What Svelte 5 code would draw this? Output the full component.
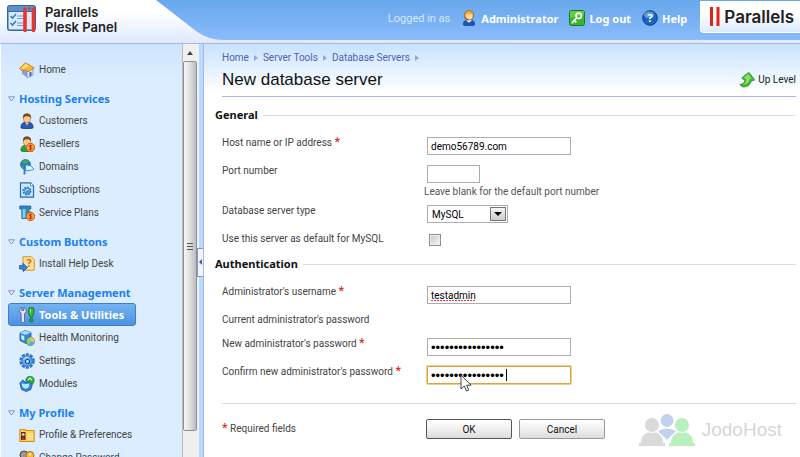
<script lang="ts">
	type NavItem = { label: string; icon: string; active?: boolean };
	type NavGroup = { title: string; items: NavItem[] };

	const groups: NavGroup[] = [
		{
			title: 'Hosting Services',
			items: [
				{ label: 'Customers', icon: 'customer' },
				{ label: 'Resellers', icon: 'reseller' },
				{ label: 'Domains', icon: 'domain' },
				{ label: 'Subscriptions', icon: 'subscription' },
				{ label: 'Service Plans', icon: 'plan' }
			]
		},
		{
			title: 'Custom Buttons',
			items: [{ label: 'Install Help Desk', icon: 'helpdesk' }]
		},
		{
			title: 'Server Management',
			items: [
				{ label: 'Tools & Utilities', icon: 'tools', active: true },
				{ label: 'Health Monitoring', icon: 'health' },
				{ label: 'Settings', icon: 'settings' },
				{ label: 'Modules', icon: 'modules' }
			]
		},
		{
			title: 'My Profile',
			items: [
				{ label: 'Profile & Preferences', icon: 'profile' },
				{ label: 'Change Password', icon: 'password' }
			]
		}
	];

	const crumbs = ['Home', 'Server Tools', 'Database Servers'];

	let host = $state('demo56789.com');
	let port = $state('');
	let serverType = $state('MySQL');
	let isDefault = $state(false);
	let username = $state('testadmin');
	let password = $state('abcdefgh12345678');
	let confirmPassword = $state('abcdefgh12345678');
</script>

{#snippet coin()}
	<circle cx="11.5" cy="11.5" r="4.2" fill="#f7a13c" stroke="#d8571c" />
	<path d="M13 9.8c-1-.8-2.8-.4-2.7.6.1 1.2 2.6.8 2.6 2.1 0 1.1-1.9 1.3-2.9.5M11.5 8.7v5.7" fill="none" stroke="#b02a10" stroke-width=".9" />
{/snippet}

{#snippet icon(name: string)}
	<svg class="icon" viewBox="0 0 16 16" aria-hidden="true">
		{#if name === 'home'}
			<path d="M3 7l5 2v6l-5-3z" fill="#8aa0d8" />
			<path d="M8 9l6-2v6l-6 3z" fill="#dfe6fa" stroke="#5a6fb4" stroke-width=".6" />
			<path d="M.5 6.500L6.500.8l8.700 5L9 9.800 7 7.600 3 9z" fill="#fbb829" stroke="#c4660c" stroke-width=".7" />
			<path d="M2 6.200l4.700-4.300 3 1.700L5 7z" fill="#ffe07a" />
			<path d="M10.500 10.500l2-.7v4l-2 .8z" fill="#4560b0" />
		{:else if name === 'customer' || name === 'reseller'}
			<path d="M2 15c-.5-4 1.500-6 6-6s6.500 2 6 6c-3 1.300-9 1.300-12 0z" fill={name === 'customer' ? '#2558b8' : '#2f9c3a'} stroke={name === 'customer' ? '#14357c' : '#17692a'} stroke-width=".6" />
			<path d="M6.200 9.300L8 13l1.700-3.700z" fill="#fff" />
			<path d="M8 10.200l.8 1-.8 2.400-.7-2.400z" fill="#d32" />
			<ellipse cx="8" cy="5.200" rx="3.700" ry="4.300" fill="#fbc987" stroke="#a05a1c" stroke-width=".5" />
			<path d="M4 5C3.600 1.500 5.800.4 8 .4s4.600 1.200 4 4.800C10.800 3.200 8.500 3 6.800 3.400 5.300 3.700 5 4.500 4 5z" fill="#7a4a18" />
			{#if name === 'reseller'}{@render coin()}{/if}
		{:else if name === 'operator'}
			<path d="M2.500 15c-.4-3.600 1.400-5.200 5.500-5.200s6 1.600 5.500 5.200c-3 1.200-8 1.200-11 0z" fill="#1d55b0" stroke="#123a7d" stroke-width=".6" />
			<path d="M5 10l3 2.800 3-2.800z" fill="#fff" />
			<circle cx="8" cy="5.300" r="4.700" fill="#f8a838" stroke="#9c4a10" stroke-width=".7" />
			<path d="M5.300 5c1-.8 4.300-.8 6-.3.500 3-1 4.800-3 4.800S5 7.500 5.300 5z" fill="#ffe2b4" />
			<path d="M4 7.200c.5 2 2 2.600 4 2.500" fill="none" stroke="#b02a10" />
		{:else if name === 'domain'}
			<circle cx="6.500" cy="5.500" r="5" fill="#2b7dc4" stroke="#14508c" stroke-width=".6" />
			<path d="M3 2.500c2-1.800 5-1.700 7 0C9 4 8 3.600 7 4.800 5.500 4.600 4 4 3 2.500zM2 6c2 .3 3 1.500 2.500 3.500C3 9 2 7.500 2 6z" fill="#3cb44a" />
			<path d="M5.500 5v10.500" stroke="#3d77b8" stroke-width="1.800" />
			<path d="M6.500 6.500c2-1.500 3 .8 5 0l3.500 3.500c-2 1.500-3.500 1-5 1.500-1 .3-2.500.5-3.500.2z" fill="#d6f0ff" stroke="#2784c8" stroke-width=".9" />
		{:else if name === 'subscription'}
			<path d="M1.500.8h10l3 3v11.400h-13z" fill="#cfe6fb" stroke="#2668b8" stroke-width="1.200" />
			<path d="M11.500.8v3h3" fill="#fff" stroke="#2668b8" stroke-width=".7" />
			<circle cx="8" cy="9" r="3.500" fill="#5aa4e4" stroke="#2c78c8" stroke-width="2" stroke-dasharray="1.700 1" />
			<circle cx="8" cy="9" r="3" fill="#4a94dc" />
			<path d="M6 9.500q1-2.500 3.500-2" fill="none" stroke="#d8eeff" />
		{:else if name === 'plan'}
			<path d="M.8 1h11v3h-2v9.500h-7V4h-2z" fill="#2c86c8" stroke="#12508e" stroke-width=".7" />
			<path d="M3.500 4h3v9h-3z" fill="#7bd0e8" />
			<path d="M8 5c2 0 4 1 4.500 3L9 8z" fill="#3aa03a" />
			{@render coin()}
		{:else if name === 'helpdesk'}
			<path d="M4 .8h8.500l2.700 2.700v10.700H4z" fill="#ffe6a0" stroke="#e08a14" />
			<text x="10" y="11" class="glyph" fill="#e8640c">?</text>
			<path d="M.5 9.500h3.500V7.300l4.500 4.200L4 15.600V13H.5z" fill="#2f86dc" stroke="#134a94" stroke-width=".7" />
		{:else if name === 'tools'}
			<path d="M1 1.500l1.800-1v3h2v-3L7 2c.8 2 0 3.500-1.500 4.300V14c0 2-3.300 2-3.300 0V6.300C.7 5.500.2 3.300 1 1.500z" fill="#e4e6f4" stroke="#50587c" stroke-width=".8" />
			<path d="M10 .8h4.500l.7 4.700-1.900 4.700h-2L9.300 5.500z" fill="#33b83c" stroke="#0d6e1c" stroke-width=".8" />
			<path d="M10.800 2h1.200v6z" fill="#b0f2a4" />
			<rect x="10.500" y="11.500" width="3.600" height="3.500" rx="1.500" fill="#28a032" stroke="#0d6e1c" stroke-width=".7" />
		{:else if name === 'health'}
			<path d="M1 3l5-2.500 6 2v9l-5 2-6-3z" fill="#2f86dc" stroke="#134a94" stroke-width=".7" />
			<path d="M1 3l5.500 2L12 2.500 6 .5z" fill="#a6dcfb" />
			<path d="M2.300 5l3 1.200v4.500l-3-1.400z" fill="#d3efff" />
			<circle cx="11.300" cy="11.300" r="4.200" fill="#8fd068" stroke="#39738e" stroke-width=".8" />
			<path d="M11.300 11.300V7.100a4.200 4.200 0 0 1 4 5.200z" fill="#fbc54a" />
			<path d="M11.300 11.300l4 1a4.200 4.200 0 0 1-5 3z" fill="#5ba6ec" />
		{:else if name === 'settings'}
			<circle cx="8" cy="8" r="6.500" fill="none" stroke="#2a74cc" stroke-width="2.400" stroke-dasharray="3 1.100" />
			<circle cx="8" cy="8" r="5.200" fill="#62abed" stroke="#2a74cc" />
			<path d="M4.500 6.500q1.500-2.500 5-2.300" fill="none" stroke="#c4e4ff" stroke-width="1.200" />
			<circle cx="8.500" cy="8.500" r="2" fill="#eaf5ff" stroke="#164a92" stroke-width="1.200" />
		{:else if name === 'modules'}
			<circle cx="11" cy="4.500" r="4.100" fill="#37b03f" stroke="#136c22" stroke-width=".7" />
			<path d="M9 4.200l2-2 2 2" fill="none" stroke="#d7ffcf" stroke-width="1.200" />
			<path d="M.8 7l3-3 3 2.500 3.500-.5 3 2.500-1.500 5-4.500 2-4.800-2z" fill="#2f8be0" stroke="#134f9e" stroke-width=".8" />
			<path d="M2.500 7.200l3.500 1 4.500-.6-1 4-2.800 1.200-3-1.600z" fill="#bfe6ff" />
		{:else if name === 'profile'}
			<path d="M.8 2.500h6v1h8.400v11H.8z" fill="#ffcf54" stroke="#d98a12" />
			<rect x="2" y="5" width="4.500" height="8" fill="#4a2a3a" />
			<circle cx="4.200" cy="7.500" r="1.500" fill="#fbc987" />
			<path d="M2.500 12.500q1.700-4 3.500 0z" fill="#d8401c" />
			<path d="M8.500 7H14M8.500 9.500H14M8.500 12H14" stroke="#fff6cc" />
		{:else if name === 'password'}
			<circle cx="5" cy="5" r="4" fill="#999" stroke="#444" />
			<circle cx="11" cy="5.500" r="4" fill="#fbb829" stroke="#b8660c" />
			<circle cx="11" cy="4.500" r="1.200" fill="#fff" />
			<path d="M4 8l-2 7h3l1.500-6zM10 9v6.500h2.500V9z" fill="#c98a1c" />
		{:else if name === 'logout'}
			<rect x=".5" y=".5" width="15" height="15" rx="2" fill="#3cb52e" stroke="#18801a" />
			<path d="M1 8V2q0-1 1-1h12q1 0 1 1v3z" fill="#7fdc62" opacity=".6" />
			<circle cx="9.700" cy="5.800" r="2.700" fill="none" stroke="#fff" stroke-width="1.700" />
			<path d="M7.800 7.800L3.500 12v1.500M5.300 10.300l2 2" fill="none" stroke="#fff" stroke-width="1.700" />
		{:else if name === 'help'}
			<circle cx="8" cy="8" r="7.300" fill="#1f62c0" stroke="#0e3f8c" />
			<ellipse cx="7" cy="4.800" rx="5" ry="3.300" fill="#7db5f0" opacity=".7" />
			<text x="8" y="12" class="glyph" fill="#fff">?</text>
		{:else if name === 'up'}
			<path d="M9.500.8q1 0 1.500.8l4.300 5.900q.5 1-.6 1h-2.200c-1.200 4.800-5.200 7.200-9.300 6.200L.8 12.600c3.200-.4 4.800-1.800 5.200-4.600L3.400 6.800q-.8-.6-.1-1.400L8.200 1.400Q8.800.8 9.500.8z" fill="#46b936" stroke="#2a8a26" stroke-width=".8" />
			<path d="M9.300 2L4.900 5.700l2.700 1.500c-.3 2.500-1.600 4.300-3.600 5.300 4-.2 6-2.500 6.500-5.800h2z" fill="#8fe072" />
		{/if}
	</svg>
{/snippet}

{#snippet star()}<span class="star">*</span>{/snippet}

<div class="page">
	<header class="top">
		<div class="brand">
			<svg class="brand-mark" viewBox="0 0 30 28" aria-hidden="true">
				<rect x="0" y="0" width="29" height="26" rx="3" fill="#2f67ad" />
				<path d="M1 6V3q0-2 2-2h23q2 0 2 2v3z" fill="#5f90cc" />
				<path d="M1.500 7h26v16q0 1.500-1.500 1.500H3q-1.500 0-1.500-1.500z" fill="#dbe9f8" />
				<path d="M3.500 11l2 2L9 9M3.500 18l2 2L9 16" fill="none" stroke="#2f7ed0" stroke-width="1.600" />
				<path d="M10 11h7M10 13.500h7M10 18h7M10 20.500h7" stroke="#6f9fd6" />
				<path d="M18 4v21.500M26.500 4v21.500" stroke="#e8342c" stroke-width="3.600" stroke-linecap="round" />
				<circle cx="22.300" cy="3.500" r="1.300" fill="#e8342c" />
			</svg>
			<div class="brand-name">Parallels<br />Plesk Panel</div>
		</div>
		<nav class="account">
			<span class="logged">Logged in as</span>
			<a href="#administrator">{@render icon('operator')}Administrator</a>
			<a href="#logout">{@render icon('logout')}Log out</a>
			<a href="#help">{@render icon('help')}Help</a>
		</nav>
		<a class="vendor" href="#parallels">
			<svg class="bars" viewBox="0 0 10 19" aria-hidden="true">
				<path d="M1.500 0v19M8 0v19" stroke="#e2231a" stroke-width="3" />
			</svg>
			Parallels
		</a>
	</header>

	<div class="body">
		<aside class="sidebar">
			<nav class="menu">
				<ul>
					<li><a class="item" href="#home">{@render icon('home')}Home</a></li>
				</ul>
				{#each groups as group}
					<h2>
						<svg class="fold" viewBox="0 0 7 6" aria-hidden="true"><path d="M.5.8h6L3.500 5z" fill="#e8f0ff" stroke="#7a86d0" stroke-width=".9" /></svg>
						{group.title}
					</h2>
					<ul>
						{#each group.items as item}
							<li>
								<a class="item" class:active={item.active} href="#{item.icon}">
									{@render icon(item.icon)}{item.label}
								</a>
							</li>
						{/each}
					</ul>
				{/each}
			</nav>
			<div class="scrollbar">
				<div class="scroll-up">
					<svg viewBox="0 0 6 4" aria-hidden="true"><path d="M0 4l3-4 3 4z" fill="#444" /></svg>
				</div>
				<div class="thumb"><i></i><i></i><i></i></div>
			</div>
			<div class="splitter">
				<button class="collapse" aria-label="Hide sidebar">
					<svg viewBox="0 0 3 6" aria-hidden="true"><path d="M3 0v6L0 3z" fill="#4058b0" /></svg>
				</button>
			</div>
		</aside>

		<main>
			<nav class="crumbs">
				{#each crumbs as crumb}
					<a href="#crumb">{crumb}</a>
					<svg viewBox="0 0 4 6" aria-hidden="true"><path d="M0 0l4 3-4 3z" fill="#8fa4e8" /></svg>
				{/each}
			</nav>
			<div class="heading">
				<h1>New database server</h1>
				<a class="up-level" href="#up">{@render icon('up')}Up Level</a>
			</div>

			<form onsubmit={(e) => e.preventDefault()}>
				<fieldset>
					<h3>General</h3>
					<div class="row">
						<label for="host">Host name or IP address {@render star()}</label>
						<input id="host" class="text" type="text" bind:value={host} />
					</div>
					<div class="row port">
						<label for="port">Port number</label>
						<div>
							<input id="port" class="text short" type="text" bind:value={port} />
							<p class="hint">Leave blank for the default port number</p>
						</div>
					</div>
					<div class="row">
						<label for="type">Database server type</label>
						<div class="select">
							<select id="type" bind:value={serverType}>
								<option>MySQL</option>
								<option>PostgreSQL</option>
							</select>
							<span class="drop"><svg viewBox="0 0 8 4" aria-hidden="true"><path d="M0 0h8L4 4z" fill="#000" /></svg></span>
						</div>
					</div>
					<div class="row last">
						<label for="default">Use this server as default for MySQL</label>
						<input id="default" class="check" type="checkbox" bind:checked={isDefault} />
					</div>
				</fieldset>

				<fieldset>
					<h3>Authentication</h3>
					<div class="row">
						<label for="username">Administrator's username {@render star()}</label>
						<div class="field">
							<input id="username" class="text" type="text" spellcheck="false" bind:value={username} />
							<span class="squiggle"></span>
						</div>
					</div>
					<div class="row current">
						<span>Current administrator's password</span>
					</div>
					<div class="row">
						<label for="password">New administrator's password {@render star()}</label>
						<input id="password" class="text" type="password" bind:value={password} />
					</div>
					<div class="row">
						<label for="confirm">Confirm new administrator's password {@render star()}</label>
						<div class="field">
							<input id="confirm" class="text focused" type="password" bind:value={confirmPassword} />
							<span class="caret"></span>
							<svg class="pointer" viewBox="0 0 12 18" aria-hidden="true">
								<path d="M1 1v14l3.300-3 2.300 5 2.200-1-2.200-4.800H11z" fill="#fff" stroke="#3c4250" />
							</svg>
						</div>
					</div>
				</fieldset>

				<div class="row actions">
					<span>{@render star()} Required fields</span>
					<div class="buttons">
						<button class="btn primary" type="submit">OK</button>
						<button class="btn" type="button">Cancel</button>
					</div>
				</div>
			</form>

			<div class="watermark">
				<svg viewBox="0 0 56 32" aria-hidden="true">
					<path d="M19 17q9-5 18 0l-9 9z" fill="#c3d2ec" />
					<circle cx="28" cy="6.500" r="6.500" fill="#c3d2ec" />
					<path d="M0 32v-3h2c0-7 4-11 11-11s11 4 11 11h2v3z" fill="#dadada" />
					<circle cx="13" cy="11" r="7.500" fill="#dadada" stroke="#fff" />
					<path d="M30 32v-3h2c0-7 4-11 11-11s11 4 11 11h2v3z" fill="#b9f0bd" />
					<circle cx="43" cy="11" r="7.500" fill="#b9f0bd" stroke="#fff" />
				</svg>
				<span>JodoHost</span>
			</div>
		</main>
	</div>
</div>

<style>
	:global(body) {
		background: #fff;
	}

	.page {
		display: flex;
		flex-direction: column;
		height: 100vh;
		overflow: hidden;
		font-family: Roboto, 'Liberation Sans', sans-serif;
		font-size: 10px;
		line-height: 12px;
		color: #444;
	}

	a {
		color: inherit;
		text-decoration: none;
	}

	h1,
	h2,
	h3,
	p,
	ul,
	fieldset {
		margin: 0;
		padding: 0;
		border: none;
		list-style: none;
	}

	.icon {
		width: 16px;
		height: 16px;
		flex: none;
	}

	.glyph {
		font: bold 11px/11px 'Noto Sans', sans-serif;
		text-anchor: middle;
	}

	.top {
		display: flex;
		align-items: flex-start;
		flex: none;
		height: 40px;
		background: linear-gradient(#67a8ec, #8abbfb);
		border-bottom: 3px solid #e2ebfd;
		box-shadow: 0 1px 0 #a8b5e8;
		position: relative;
	}

	.brand {
		display: flex;
		gap: 8px;
		width: 230px;
		height: 40px;
		padding: 5px 0 0 7px;
		box-sizing: border-box;
		background: linear-gradient(#fff 30%, #e2ebfd);
		clip-path: path('M0 0H156L196 31Q208 40 224 40H0z');
	}

	.brand-mark {
		width: 30px;
		height: 28px;
	}

	.brand-name {
		font: 600 13px/15px Inter, sans-serif;
		color: #222;
	}

	.account {
		display: flex;
		align-items: center;
		justify-content: flex-end;
		flex: 1;
		gap: 11px;
		height: 36px;
		margin-right: 13px;
		font: bold 11px 'Noto Sans', sans-serif;
		color: #fff;
	}

	.account a {
		display: flex;
		align-items: center;
		gap: 4px;
	}

	.logged {
		font: 11px Roboto, sans-serif;
		color: #d5e7fd;
	}

	.vendor {
		display: flex;
		align-items: center;
		gap: 4px;
		height: 32px;
		margin-top: 1px;
		padding: 0 6px 0 9px;
		border: 1px solid #fff;
		border-width: 0 0 1px 1px;
		border-radius: 0 0 0 4px;
		background: linear-gradient(#fff 40%, #dcebfc);
		box-sizing: border-box;
		font: 600 17px Inter, sans-serif;
		color: #222;
	}

	.bars {
		width: 10px;
		height: 19px;
	}

	.body {
		display: flex;
		flex: 1;
		min-height: 0;
		margin-top: 1px;
	}

	.sidebar {
		display: flex;
		flex: none;
		width: 203px;
		background: #dcedff;
	}

	.menu {
		flex: 1;
		padding: 14px 0 0 7px;
		border-left: 1px solid #fff;
		background: linear-gradient(#cfe5fd, #dcedff 40px);
		overflow: hidden;
	}

	.menu h2 {
		display: flex;
		align-items: center;
		gap: 4px;
		height: 21px;
		margin-top: 7px;
		font: bold 11px 'Noto Sans', sans-serif;
		color: #1a80ee;
	}

	.fold {
		width: 7px;
		height: 6px;
	}

	.item {
		display: flex;
		align-items: center;
		gap: 4px;
		height: 23px;
		width: 128px;
		padding-left: 10px;
		border: 1px solid transparent;
		border-radius: 3px;
		box-sizing: border-box;
		white-space: nowrap;
	}

	.item.active {
		border-color: #3b7fca;
		background: linear-gradient(#74b2f2, #4a93e0);
		font: bold 11px 'Noto Sans', sans-serif;
		color: #fff;
	}

	.scrollbar {
		display: flex;
		flex-direction: column;
		width: 15px;
		box-sizing: border-box;
		border-left: 1px solid #bbb;
		background: #f0f0f0;
	}

	.scroll-up {
		display: flex;
		align-items: center;
		justify-content: center;
		height: 17px;
	}

	.scroll-up svg {
		width: 6px;
		height: 4px;
	}

	.thumb {
		display: flex;
		flex-direction: column;
		align-items: center;
		justify-content: center;
		gap: 2px;
		flex: 1;
		margin-bottom: 26px;
		border: 1px solid #8e8e8e;
		border-radius: 2px;
		background: linear-gradient(90deg, #f6f6f6, #e2e2e4 45%, #bcbcc0);
	}

	.thumb i {
		width: 6px;
		height: 1px;
		background: #555;
	}

	.splitter {
		display: flex;
		align-items: center;
		justify-content: flex-end;
		width: 6px;
		background: linear-gradient(90deg, #e8f3ff 2px, #bcdafd 2px);
	}

	.collapse {
		display: flex;
		align-items: center;
		justify-content: center;
		width: 6px;
		height: 29px;
		padding: 0;
		margin-top: 23px;
		border: 1px solid #8496d4;
		border-right: none;
		background: #f2f7ff;
	}

	.collapse svg {
		width: 3px;
		height: 6px;
	}

	main {
		flex: 1;
		min-width: 0;
		position: relative;
		padding: 8px 4px 0 18px;
		border-left: 1px solid #a8b8ee;
		background: linear-gradient(#c8e2ff, #fff 48px);
	}

	.crumbs {
		display: flex;
		align-items: center;
		gap: 5px;
		color: #5062b0;
	}

	.crumbs svg {
		width: 4px;
		height: 6px;
	}

	.heading {
		display: flex;
		align-items: center;
		justify-content: space-between;
		height: 32px;
		border-bottom: 1px solid #a9b4ec;
	}

	h1 {
		font: 17px 'Liberation Sans', Arial, sans-serif;
		color: #111;
	}

	.up-level {
		display: flex;
		align-items: center;
		gap: 3px;
		color: #222;
	}

	form {
		padding-top: 8px;
	}

	h3 {
		display: flex;
		align-items: center;
		gap: 5px;
		height: 16px;
		margin: 2px 0 14px -7px;
		font: bold 11px/16px 'Noto Sans', sans-serif;
		color: #111;
	}

	h3::after {
		content: '';
		flex: 1;
		height: 1px;
		background: #ddd;
	}

	.row {
		display: grid;
		grid-template-columns: 205px 1fr;
		align-items: start;
		height: 28px;
	}

	.row.port {
		height: 40px;
	}

	.row.last {
		height: 21px;
	}

	.row.current {
		height: 24px;
	}

	.star {
		color: #e02020;
		font-size: 13px;
		line-height: 10px;
	}

	.field {
		position: relative;
	}

	.text {
		display: block;
		width: 144px;
		height: 18px;
		padding: 1px 3px 0;
		border: 1px solid #aaabb3;
		box-sizing: border-box;
		background: #fff;
		font: 10px Roboto, sans-serif;
		color: #000;
		outline: none;
	}

	.text[type='password'] {
		font: 13px 'Liberation Sans', sans-serif;
	}

	.text.short {
		width: 53px;
	}

	.text.focused {
		border-color: #d9a441;
		box-shadow: 0 0 0 1px #efcf8d;
		border-radius: 1px;
	}

	.squiggle {
		position: absolute;
		left: 4px;
		top: 14px;
		width: 45px;
		height: 1px;
		background: repeating-linear-gradient(90deg, #e33 0 2px, transparent 2px 3px);
	}

	.caret {
		position: absolute;
		left: 79px;
		top: 3px;
		width: 1px;
		height: 12px;
		background: #000;
	}

	.pointer {
		position: absolute;
		left: 33px;
		top: 8px;
		width: 12px;
		height: 18px;
	}

	.hint {
		margin: 3px 0 0 -3px;
		color: #555;
	}

	.select {
		position: relative;
		width: 81px;
	}

	select {
		display: block;
		width: 100%;
		height: 18px;
		padding: 0 4px;
		border: 1px solid #aaabb3;
		border-radius: 0;
		appearance: none;
		background: #fff;
		font: 10px Roboto, sans-serif;
		color: #000;
	}

	.drop {
		position: absolute;
		right: 2px;
		top: 2px;
		display: flex;
		align-items: center;
		justify-content: center;
		width: 16px;
		height: 14px;
		border: 1px solid #777;
		box-sizing: border-box;
		background: linear-gradient(#f4f4f4, #ccc);
		pointer-events: none;
	}

	.drop svg {
		width: 8px;
		height: 4px;
	}

	.check {
		width: 12px;
		height: 12px;
		margin: 1px 2px;
		border: 1px solid #8f8f8f;
		appearance: none;
		background: linear-gradient(135deg, #c4c7cc, #f6f6f6);
		box-shadow: inset 0 0 0 1px #eee;
	}

	.check:checked {
		background: #4a93e0;
	}

	.actions {
		align-items: center;
		height: 50px;
		margin-top: 9px;
		border-top: 1px solid #d8d8d8;
	}

	.buttons {
		display: flex;
		gap: 7px;
		margin-left: -1px;
	}

	.btn {
		width: 86px;
		height: 20px;
		padding: 0;
		border: 1px solid #999;
		border-radius: 2px;
		background: linear-gradient(#fff, #f0f0f0 50%, #dcdce0);
		font: 10px Roboto, sans-serif;
		color: #111;
	}

	.btn.primary {
		border-color: #555;
	}

	.watermark {
		position: absolute;
		right: 18px;
		bottom: 11px;
		display: flex;
		align-items: center;
		gap: 7px;
		font: 19px 'Liberation Sans', Arial, sans-serif;
		color: #d6d6d6;
	}

	.watermark svg {
		width: 56px;
		height: 32px;
	}
</style>
